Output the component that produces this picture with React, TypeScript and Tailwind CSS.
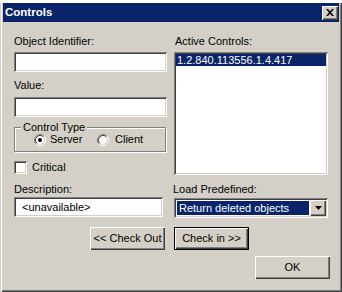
import React from "react";

const sunken =
  "bg-white shadow-[inset_1px_1px_#808080,inset_-1px_-1px_#ffffff,inset_2px_2px_#404040,inset_-2px_-2px_#d4d0c8]";
const raised =
  "bg-[#d4d0c8] shadow-[inset_1px_1px_#ffffff,inset_-1px_-1px_#404040,inset_-2px_-2px_#808080]";

function Radio({ checked }: { checked?: boolean }) {
  return (
    <svg width="12" height="12" viewBox="0 0 12 12" className="shrink-0">
      <circle cx="6" cy="6" r="5" fill="#ffffff" />
      <path d="M2.11 9.89 A5.5 5.5 0 0 1 9.89 2.11" fill="none" stroke="#808080" />
      <path d="M9.89 2.11 A5.5 5.5 0 0 1 2.11 9.89" fill="none" stroke="#ffffff" />
      <path d="M2.82 9.18 A4.5 4.5 0 0 1 9.18 2.82" fill="none" stroke="#404040" />
      <path d="M9.18 2.82 A4.5 4.5 0 0 1 2.82 9.18" fill="none" stroke="#d4d0c8" />
      {checked && <circle cx="6" cy="6" r="2" fill="#000000" />}
    </svg>
  );
}

function Button({ label, isDefault }: { label: string; isDefault?: boolean }) {
  if (isDefault) {
    return (
      <div className="w-[75px] h-[23px] border border-black">
        <div className={`w-full h-full ${raised} flex items-center justify-center`}>{label}</div>
      </div>
    );
  }
  return (
    <div className={`w-[75px] h-[23px] ${raised} flex items-center justify-center`}>{label}</div>
  );
}

export default function App() {
  return (
    <div
      className="w-[342px] h-[292px] bg-white flex flex-col text-[11px] leading-[13px] text-black"
      style={{ fontFamily: '"Liberation Sans", Arial, sans-serif' }}
    >
      <div className="h-[3px] bg-white" />
      <div className="flex-1 flex flex-col bg-[#d4d0c8] pl-[3px] pr-[3px] pb-[3px] shadow-[inset_1px_0_#d4d0c8,inset_2px_0_#ffffff,inset_-1px_-1px_#404040,inset_-2px_-2px_#808080]">
        {/* Title bar */}
        <div className="h-[19px] bg-[#0a246a] flex items-center justify-between pl-[2px] pr-[1px]">
          <span className="text-white font-bold text-[11.5px]">Controls</span>
          <div className={`w-[16px] h-[14px] ${raised} flex items-center justify-center`}>
            <svg width="8" height="7" viewBox="0 0 8 7">
              <path d="M0 0h2l2 2.2L6 0h2L5 3.5 8 7H6L4 4.8 2 7H0l3-3.5z" fill="#000" />
            </svg>
          </div>
        </div>

        {/* Body */}
        <div className="flex-1 flex flex-col pt-[13px]">
          <div className="flex gap-[7px] pl-[11px]">
            <div className="w-[153px] flex flex-col">
              <div>Object Identifier:</div>
              <div className={`mt-[4px] h-[20px] ${sunken}`} />
              <div className="mt-[7px]">Value:</div>
              <div className={`mt-[5px] h-[20px] ${sunken}`} />
              <div className="relative mt-[10px] w-[152px] h-[25px] border border-[#808080] shadow-[inset_1px_1px_#ffffff,1px_1px_#ffffff]">
                <span className="absolute left-[6px] -top-[7px] px-[2px] bg-[#d4d0c8]">Control Type</span>
                <div className="flex items-center pt-[5px] pl-[19px]">
                  <Radio checked />
                  <span className="ml-[4px] w-[47px]">Server</span>
                  <Radio />
                  <span className="ml-[6px]">Client</span>
                </div>
              </div>
              <div className="mt-[9px] flex items-center">
                <div className={`w-[13px] h-[13px] ${sunken}`} />
                <span className="ml-[5px]">Critical</span>
              </div>
            </div>
            <div className="w-[154px] flex flex-col">
              <div className="pl-[1px]">Active Controls:</div>
              <div className={`mt-[4px] h-[123px] ${sunken} p-[2px]`}>
                <div className="bg-[#0a246a] text-white h-[12px] leading-[12px] pl-[1px]">1.2.840.113556.1.4.417</div>
              </div>
            </div>
          </div>

          <div className="flex gap-[11px] pl-[11px] mt-[8px]">
            <div className="w-[149px] flex flex-col">
              <div>Description:</div>
              <div className={`mt-[1px] h-[20px] ${sunken} flex items-center pl-[8px]`}>&lt;unavailable&gt;</div>
            </div>
            <div className="w-[154px] flex flex-col">
              <div className="-ml-[1px]">Load Predefined:</div>
              <div className={`mt-[2px] h-[20px] ${sunken} flex items-stretch p-[2px]`}>
                <div className="flex-1 bg-[#0a246a] text-white flex items-center pl-[2px] m-[1px] mr-[1px]">Return deleted objects</div>
                <div className={`w-[16px] ${raised} flex items-center justify-center`}>
                  <svg width="7" height="4" viewBox="0 0 7 4">
                    <path d="M0 0h7L3.5 4z" fill="#000" />
                  </svg>
                </div>
              </div>
            </div>
          </div>

          <div className="flex gap-[9px] pl-[87px] mt-[9px]">
            <Button label="<< Check Out" />
            <Button label="Check in >>" isDefault />
          </div>

          <div className="flex justify-end pr-[9px] mt-[6px]">
            <Button label="OK" />
          </div>
        </div>
      </div>
    </div>
  );
}
